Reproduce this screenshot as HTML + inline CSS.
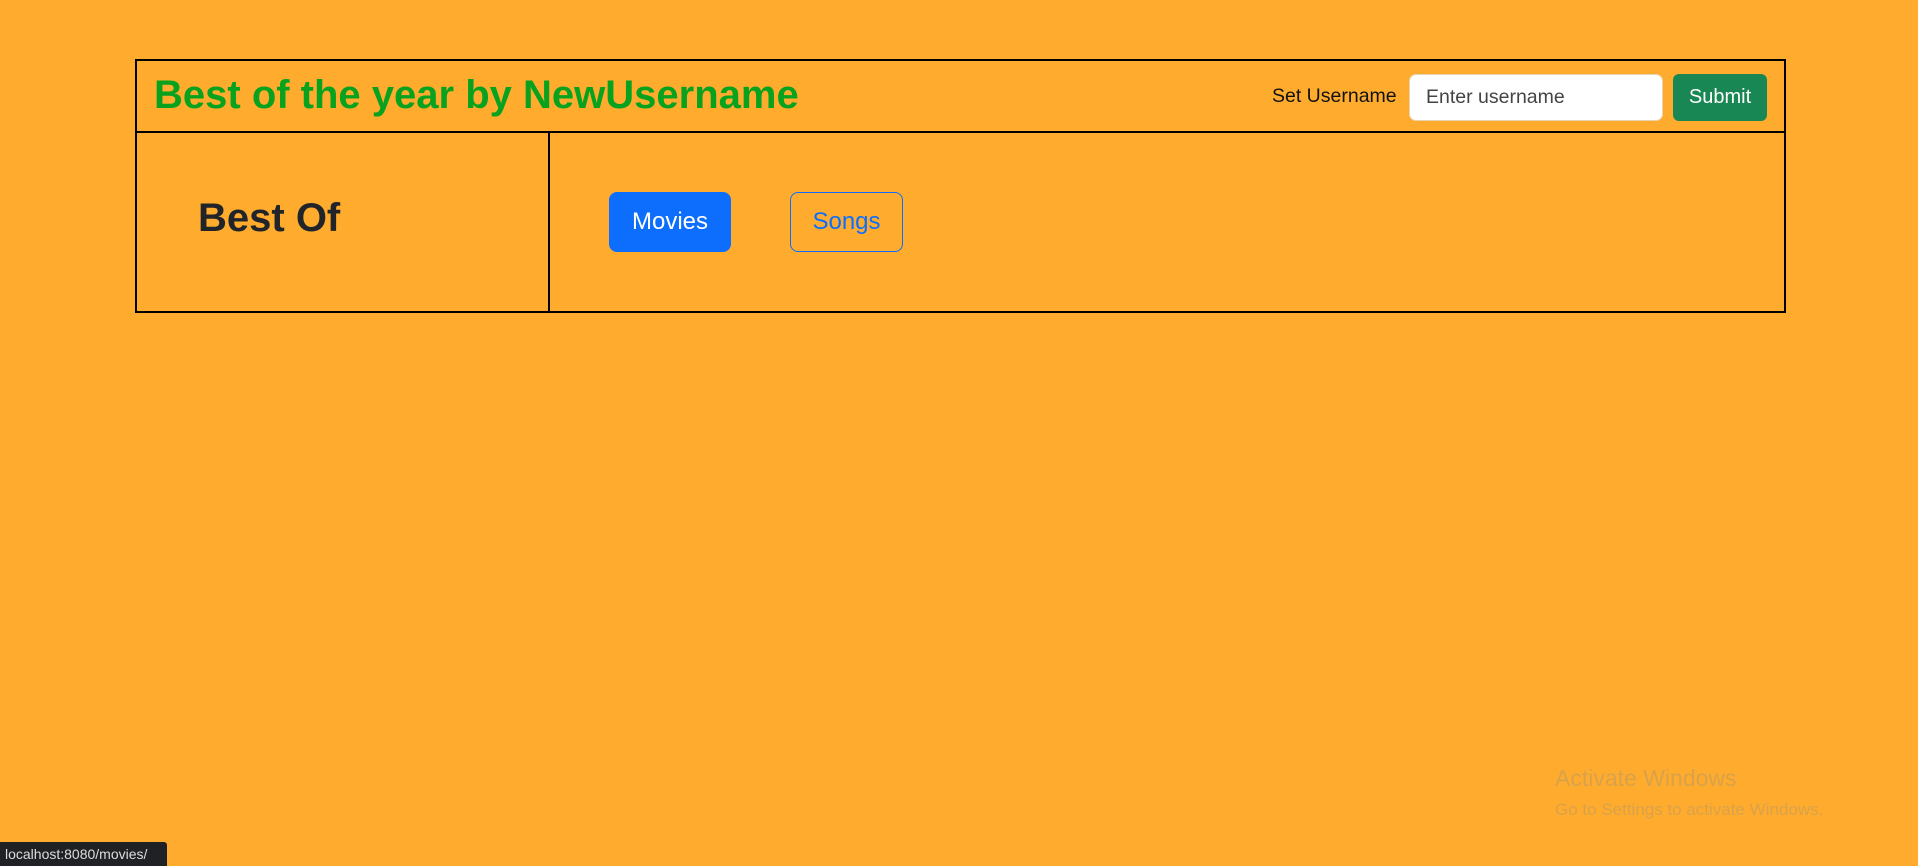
<!DOCTYPE html>
<html><head><meta charset="utf-8"><style>
*{box-sizing:border-box;margin:0;padding:0}
html,body{width:1918px;height:866px;overflow:hidden;background:#ffac2e;font-family:"Liberation Sans",Arial,sans-serif;position:relative}
.box{position:absolute;left:135px;top:59px;width:1651px;height:254px;border:2px solid #000}
.hdr{position:absolute;left:0;top:0;right:0;height:72px;border-bottom:2px solid #000}
.title{position:absolute;left:17px;top:12px;font-size:40px;font-weight:bold;color:#08a21f;white-space:nowrap}
.lbl{position:absolute;left:1135px;top:24px;font-size:19.5px;color:#111}
.inp{position:absolute;left:1272px;top:13px;width:254px;height:47px;background:#fff;border:1px solid #e8d3b0;border-radius:7px;font-size:19.5px;color:#444;padding:11px 16px}
.sub{position:absolute;left:1536px;top:13px;width:94px;height:47px;background:#198754;border-radius:6px;color:#fff;font-size:20px;text-align:center;line-height:47px}
.div{position:absolute;left:411px;top:72px;bottom:0;border-left:2px solid #000}
.bo{position:absolute;left:61px;top:135px;font-size:40px;font-weight:bold;color:#212529}
.mv{position:absolute;left:472px;top:131px;width:122px;height:60px;background:#0d6efd;border-radius:8px;color:#fff;font-size:24px;text-align:center;line-height:60px}
.sg{position:absolute;left:653px;top:131px;width:113px;height:60px;border:1px solid #0d6efd;border-radius:8px;color:#0d6efd;font-size:24px;text-align:center;line-height:58px}
.wm1{position:absolute;left:1555px;top:765px;font-size:23px;color:#d9a24a}
.wm2{position:absolute;left:1555px;top:800px;font-size:17px;color:#d9a24a}
.st{position:absolute;left:0;top:842px;width:167px;height:24px;background:#202124;color:#ddd;font-size:14px;line-height:24px;padding-left:5px;border-top-right-radius:3px}
</style></head><body>
<div class="box">
 <div class="hdr">
  <div class="title">Best of the year by NewUsername</div>
  <div class="lbl">Set Username</div>
  <div class="inp">Enter username</div>
  <div class="sub">Submit</div>
 </div>
 <div class="div"></div>
 <div class="bo">Best Of</div>
 <div class="mv">Movies</div>
 <div class="sg">Songs</div>
</div>
<div class="wm1">Activate Windows</div>
<div class="wm2">Go to Settings to activate Windows.</div>
<div class="st">localhost:8080/movies/</div>
</body></html>
